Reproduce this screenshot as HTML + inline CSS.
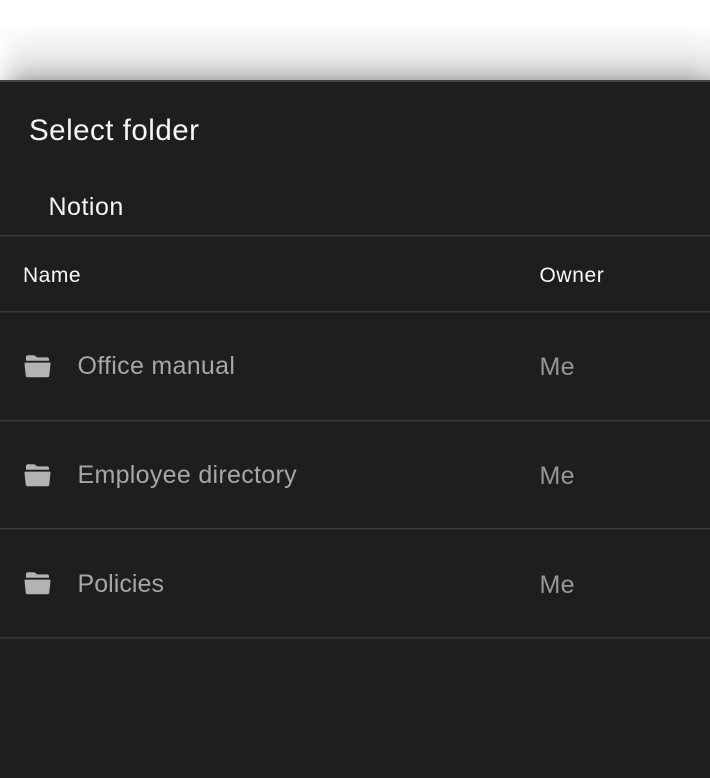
<!DOCTYPE html>
<html><head><meta charset="utf-8"><style>
html,body{margin:0;padding:0;background:#fff;width:710px;height:778px;overflow:hidden}
#w{position:absolute;left:0;top:0;width:710px;height:778px;overflow:hidden;font-family:"Liberation Sans",sans-serif;background:#fff}
.g{position:absolute;left:0;top:27px;width:710px;height:53px;background:linear-gradient(to bottom,#fdfdfd 0,#f9f9f9 5px,#f5f5f5 14px,#ececec 26px,#dddddd 38px,#c9c9c9 47px,#b2b2b2 53px)}
.f{position:absolute;left:0;top:27px;width:36px;height:53px;background:linear-gradient(to right,rgba(255,255,255,.75),rgba(255,255,255,.45) 10px,rgba(255,255,255,.12) 22px,rgba(255,255,255,0))}
.r{position:absolute;right:0;top:27px;width:24px;height:53px;background:linear-gradient(to left,rgba(255,255,255,.25),rgba(255,255,255,0))}
.d{position:absolute;left:0;top:80px;width:710px;height:698px;background:#1e1e20;border-top:2px solid #434345;box-sizing:border-box}
.t{position:absolute;white-space:nowrap;line-height:30px;height:30px}
.l{position:absolute;left:0;width:710px;height:1px;background:#3a3a3c;box-shadow:0 1px #29292b}
.n{font-size:25px;color:#a6a6a8;left:77.5px}
.m{font-size:25px;color:#97979a;left:539.5px;letter-spacing:.3px}
.h{font-size:21px;color:#fafafa}
svg{position:absolute;left:24px;width:27px;height:23px}
</style></head><body><div id="w">
<div class="g"></div><div class="f"></div><div class="r"></div>
<div class="d"></div>
<div class="t" style="left:29px;top:116px;font-size:29.5px;color:#f6f6f6;letter-spacing:.5px">Select folder</div>
<div class="t" style="left:48.5px;top:192px;font-size:25px;color:#f6f6f6;letter-spacing:.5px">Notion</div>
<div class="l" style="top:235px"></div>
<div class="t h" style="left:23px;top:261px;letter-spacing:.5px">Name</div>
<div class="t h" style="left:539.5px;top:261px;letter-spacing:.6px">Owner</div>
<div class="l" style="top:311px"></div>
<svg style="top:355px" viewBox="0 0 27 23"><path d="M2 5.800V2Q2 .2 4 .2H9.500Q11 .2 12 1.400L13 2.400H23Q25 2.400 25 4.400V5.800Z M1.200 7.600H25.800Q26.600 7.600 26.500 8.600L25.300 20.500Q25.100 22.200 23.400 22.200H3.600Q1.900 22.200 1.700 20.500L.5 8.600Q.4 7.600 1.200 7.600Z" fill="#b3b3b6"/></svg>
<div class="t n" style="top:351px;letter-spacing:.3px">Office manual</div>
<div class="t m" style="top:352px">Me</div>
<div class="l" style="top:420px"></div>
<svg style="top:464px" viewBox="0 0 27 23"><path d="M2 5.800V2Q2 .2 4 .2H9.500Q11 .2 12 1.400L13 2.400H23Q25 2.400 25 4.400V5.800Z M1.200 7.600H25.800Q26.600 7.600 26.500 8.600L25.300 20.500Q25.100 22.200 23.400 22.200H3.600Q1.900 22.200 1.700 20.500L.5 8.600Q.4 7.600 1.200 7.600Z" fill="#b3b3b6"/></svg>
<div class="t n" style="top:460px;letter-spacing:.3px">Employee directory</div>
<div class="t m" style="top:461px">Me</div>
<div class="l" style="top:528px"></div>
<svg style="top:572px" viewBox="0 0 27 23"><path d="M2 5.800V2Q2 .2 4 .2H9.500Q11 .2 12 1.400L13 2.400H23Q25 2.400 25 4.400V5.800Z M1.200 7.600H25.800Q26.600 7.600 26.500 8.600L25.300 20.500Q25.100 22.200 23.400 22.200H3.600Q1.900 22.200 1.700 20.500L.5 8.600Q.4 7.600 1.200 7.600Z" fill="#b3b3b6"/></svg>
<div class="t n" style="top:569px;letter-spacing:.05px">Policies</div>
<div class="t m" style="top:570px">Me</div>
<div class="l" style="top:637px"></div>
</div></body></html>
